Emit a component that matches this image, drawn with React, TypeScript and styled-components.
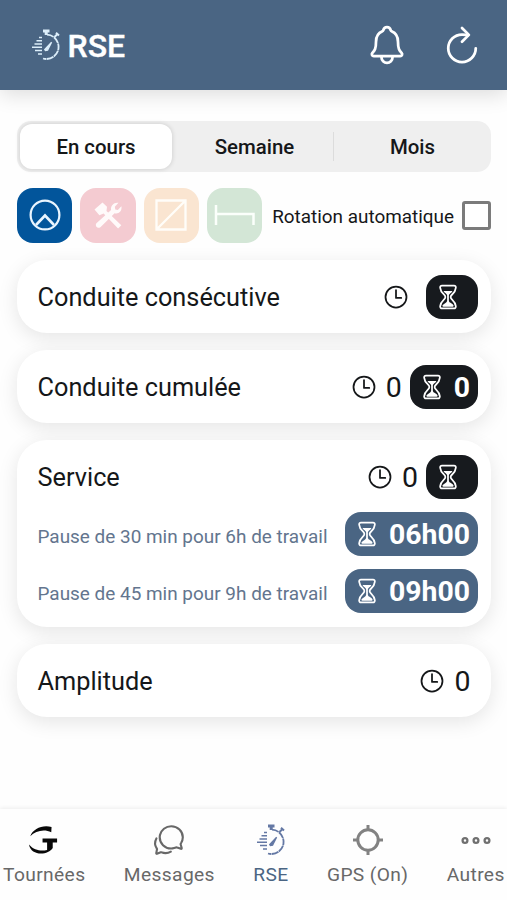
import React from 'react';
import styled, { createGlobalStyle } from 'styled-components';
import {
  IoNotificationsOutline,
  IoRefreshOutline,
  IoTimeOutline,
  IoHourglassOutline,
  IoChatbubblesOutline,
} from 'react-icons/io5';

const GlobalStyle = createGlobalStyle`
  * { box-sizing: border-box; }
  body {
    margin: 0;
    background: #fefefe;
    color: #151719;
    font-family: Roboto, sans-serif;
  }
  svg { display: block; flex: none; }
`;

const Screen = styled.div`
  width: 507px;
  height: 900px;
  display: flex;
  flex-direction: column;
  overflow: hidden;
`;

const Header = styled.header`
  height: 89.5px;
  flex: none;
  display: flex;
  align-items: center;
  padding: 1px 23px 0 30px;
  background: #4a6583;
  color: #fff;
  box-shadow: 0 4px 20px rgba(0, 0, 0, 0.14);
`;

const Title = styled.h1`
  flex: 1;
  margin: 0 0 0 5.5px;
  padding-top: 2px;
  font-size: 32px;
  line-height: 40px;
  font-weight: 500;
  -webkit-text-stroke: 0.4px currentColor;
`;

const HeaderActions = styled.div`
  display: flex;
  gap: 31.5px;
`;

const IconButton = styled.button`
  padding: 0;
  border: 0;
  background: none;
  color: inherit;
  font-size: 44px;
`;

const Main = styled.main`
  flex: 1;
  padding: 31.5px 16px 0 17px;
`;

const Segment = styled.div`
  height: 51px;
  display: grid;
  grid-template-columns: 155px 159px 1fr;
  padding: 3px 0 3px 3px;
  border-radius: 14px;
  background: #efefef;
`;

const SegmentTab = styled.button<{ $active?: boolean; $divided?: boolean }>`
  position: relative;
  margin: 0 ${p => (p.$active ? 3 : 0)}px 0 0;
  padding: 1px 0 0;
  border: 0;
  border-radius: 12px;
  background: ${p => (p.$active ? '#fff' : 'transparent')};
  box-shadow: ${p => (p.$active ? '0 0 5px rgba(0,0,0,.16)' : 'none')};
  color: #151719;
  font: 500 20.4px/44px Roboto, sans-serif;
  &::after {
    content: '';
    display: ${p => (p.$divided ? 'block' : 'none')};
    position: absolute;
    right: 0;
    top: 8px;
    width: 1.5px;
    height: 29px;
    background: #dcdcdc;
  }
`;

const ActivityBar = styled.div`
  display: flex;
  align-items: center;
  gap: 8px;
  margin-top: 15.5px;
`;

const ActivityButton = styled.button<{ $color: string }>`
  width: 55.3px;
  height: 55.5px;
  flex: none;
  padding: 0;
  border: 0;
  border-radius: 16px;
  display: grid;
  place-items: center;
  background: ${p => p.$color};
`;

const RotationLabel = styled.label`
  flex: 1;
  display: flex;
  align-items: center;
  justify-content: space-between;
  margin-left: 2px;
  padding-top: 3px;
  font-size: 18.9px;
  white-space: nowrap;
`;

const CheckBox = styled.span`
  width: 29px;
  height: 29px;
  flex: none;
  margin-top: -3px;
  border: 3px solid #7b7b7b;
  border-radius: 3px;
  background: #fff;
`;

const Cards = styled.div`
  display: flex;
  flex-direction: column;
  gap: 17px;
  margin-top: 16.5px;
`;

const Card = styled.section`
  display: flex;
  flex-direction: column;
  gap: 13px;
  padding: 15px 13px 14px 20.5px;
  border-radius: 30px;
  background: #fff;
  box-shadow: 0 5px 20px rgba(0, 0, 0, 0.1);
`;

const Row = styled.div`
  height: 44px;
  display: flex;
  align-items: center;
`;

const CardTitle = styled.h2`
  flex: 1;
  margin: 0;
  padding-top: 2px;
  font-size: 25.3px;
  font-weight: 400;
`;

const BreakLabel = styled.span`
  flex: 1;
  padding-top: 5px;
  font-size: 18.95px;
  color: #63758e;
`;

const Elapsed = styled.div<{ $last?: boolean }>`
  display: flex;
  align-items: center;
  gap: 8px;
  margin-right: ${p => (p.$last ? 7.5 : 8)}px;
  font-size: 28.5px;
  svg { font-size: 28px; }
  span { padding-top: 2px; }
`;

const EmptyValue = styled.span`
  width: 0;
`;

const Remaining = styled.div<{ $blue?: boolean }>`
  height: 44px;
  min-width: 52px;
  display: flex;
  align-items: center;
  gap: 8px;
  padding: 0 8px;
  border-radius: 16px;
  background: ${p => (p.$blue ? '#4a6583' : '#171a1e')};
  color: #fff;
  font-size: 28.4px;
  font-weight: 700;
  svg { font-size: 28px; }
  span { padding-top: 1px; }
`;

const TabBar = styled.nav`
  height: 91px;
  flex: none;
  display: flex;
  gap: 38.4px;
  padding: 13px 0 0 3px;
  background: #fefefe;
  box-shadow: 0 -1px 4px rgba(0, 0, 0, 0.07);
`;

const Tab = styled.a<{ $active?: boolean }>`
  flex: none;
  display: flex;
  flex-direction: column;
  align-items: center;
  color: ${p => (p.$active ? '#4a6583' : '#686868')};
  font-size: 19.2px;
  line-height: 24px;
  letter-spacing: 0.38px;
  white-space: nowrap;
`;

const TabIcon = styled.span`
  height: 35px;
  margin-bottom: 6px;
  display: grid;
  place-items: center;
  font-size: 34px;
`;

function Stopwatch({ color }: { color: string }) {
  return (
    <svg width="32" height="32" viewBox="0 0 32 32" fill="none" stroke={color}>
      <path d="M13 2h6.5M16.2 2v4" strokeWidth="3" />
      <path d="m24.5 8 3-3M26 3.8l3 2.7" strokeWidth="2" />
      <path d="M17 5.6a12.2 12.2 0 1 1-4 23.9" strokeWidth="1.8" strokeDasharray="7 .5" />
      <path d="M9 8.5h3M6.5 11.7H12M4.5 15H12M2 18.2h10M5 21.5h7M8 25h4" strokeWidth="1.5" />
      <path d="m14.8 20.5 6.8-7.2-4 7.8-2.2.4Z" strokeWidth="1.3" fill={color} />
    </svg>
  );
}

function WheelIcon() {
  return (
    <svg width="34" height="34" viewBox="0 0 34 34" fill="none" stroke="#eaf5ff" strokeWidth="2.2">
      <circle cx="17" cy="17" r="14.4" />
      <path d="m8 27 9-9.5L26 27" strokeWidth="2.6" />
    </svg>
  );
}

function ToolsIcon() {
  return (
    <svg width="30" height="30" viewBox="0 0 30 30" fill="#fffafa">
      <path d="m1.5 9.5 8-7L14 6.7l-.5 4.2 14.8 14.3-3.2 3.2L10.6 13.4l-4.2 1.8Z" />
      <path d="m25.5 2.8-3.7 4 .5 2.6 2.5.5 3.6-3.6c.9 5-2.8 8-6.8 7L7.4 27.2c-2.8 2-5.8-1.2-4-3.9L18.1 10c-.8-4.3 3-8 7.4-7.2Z" />
    </svg>
  );
}

function AvailabilityIcon() {
  return (
    <svg width="32" height="32" viewBox="0 0 32 32" fill="none" stroke="#fffdf9" strokeWidth="2.3">
      <path d="M1.5 1.5h29v29h-29zM1.5 30.5l29-29" />
    </svg>
  );
}

function BedIcon() {
  return (
    <svg width="42" height="24" viewBox="0 0 42 24" fill="none" stroke="#fbfffb" strokeWidth="2.5">
      <path d="M2 2v20M2 11h37.5v11" />
    </svg>
  );
}

function GLogo() {
  return (
    <svg width="32" height="31" viewBox="1.5 0 32 32" fill="#080808">
      <path d="M3.3 12.7C6.2 4.6 16 .5 25.3 3l-.3 5.4C17.8 5 8.8 6.7 3.3 12.7Z" />
      <path d="M16 15h15v4h-4.5v5.8C22 32.5 4 33.5 2 21.2c5.6 6.5 12.8 7 18.7 5.7V19H16Z" />
    </svg>
  );
}

function GpsIcon() {
  return (
    <svg width="32" height="32" viewBox="0 0 32 32" fill="none" stroke="#828282" strokeWidth="3">
      <circle cx="16" cy="16" r="10.2" />
      <path d="M16 1v5M16 26v5M1 16h5M26 16h5" />
    </svg>
  );
}

function MoreIcon() {
  return (
    <svg width="32" height="32" viewBox="0 0 32 32" fill="none" stroke="#707070" strokeWidth="2.3">
      <circle cx="5" cy="16.5" r="2.4" />
      <circle cx="16" cy="16.5" r="2.4" />
      <circle cx="27" cy="16.5" r="2.4" />
    </svg>
  );
}

function ElapsedTime({ value, last }: { value?: string; last?: boolean }) {
  return (
    <Elapsed $last={last}>
      <IoTimeOutline />
      {value ? <span>{value}</span> : <EmptyValue />}
    </Elapsed>
  );
}

function RemainingTime({ value, blue }: { value?: string; blue?: boolean }) {
  return (
    <Remaining $blue={blue}>
      <IoHourglassOutline />
      {value && <span>{value}</span>}
    </Remaining>
  );
}

export default function App() {
  return (
    <Screen>
      <GlobalStyle />
      <Header>
        <Stopwatch color="#dceefa" />
        <Title>RSE</Title>
        <HeaderActions>
          <IconButton aria-label="Notifications"><IoNotificationsOutline /></IconButton>
          <IconButton aria-label="Actualiser"><IoRefreshOutline /></IconButton>
        </HeaderActions>
      </Header>
      <Main>
        <Segment>
          <SegmentTab $active>En cours</SegmentTab>
          <SegmentTab $divided>Semaine</SegmentTab>
          <SegmentTab>Mois</SegmentTab>
        </Segment>
        <ActivityBar>
          <ActivityButton $color="#02559b" aria-label="Conduite"><WheelIcon /></ActivityButton>
          <ActivityButton $color="#f4cbd1" aria-label="Travail"><ToolsIcon /></ActivityButton>
          <ActivityButton $color="#fae5d1" aria-label="Disponibilité"><AvailabilityIcon /></ActivityButton>
          <ActivityButton $color="#d3e6d6" aria-label="Repos"><BedIcon /></ActivityButton>
          <RotationLabel>Rotation automatique<CheckBox /></RotationLabel>
        </ActivityBar>
        <Cards>
          <Card>
            <Row><CardTitle>Conduite consécutive</CardTitle><ElapsedTime /><RemainingTime /></Row>
          </Card>
          <Card>
            <Row><CardTitle>Conduite cumulée</CardTitle><ElapsedTime value="0" /><RemainingTime value="0" /></Row>
          </Card>
          <Card>
            <Row><CardTitle>Service</CardTitle><ElapsedTime value="0" /><RemainingTime /></Row>
            <Row><BreakLabel>Pause de 30 min pour 6h de travail</BreakLabel><RemainingTime value="06h00" blue /></Row>
            <Row><BreakLabel>Pause de 45 min pour 9h de travail</BreakLabel><RemainingTime value="09h00" blue /></Row>
          </Card>
          <Card>
            <Row><CardTitle>Amplitude</CardTitle><ElapsedTime value="0" last /></Row>
          </Card>
        </Cards>
      </Main>
      <TabBar>
        <Tab><TabIcon><GLogo /></TabIcon>Tournées</Tab>
        <Tab><TabIcon><IoChatbubblesOutline /></TabIcon>Messages</Tab>
        <Tab $active><TabIcon><Stopwatch color="#6478a4" /></TabIcon>RSE</Tab>
        <Tab><TabIcon><GpsIcon /></TabIcon>GPS (On)</Tab>
        <Tab><TabIcon><MoreIcon /></TabIcon>Autres</Tab>
      </TabBar>
    </Screen>
  );
}
